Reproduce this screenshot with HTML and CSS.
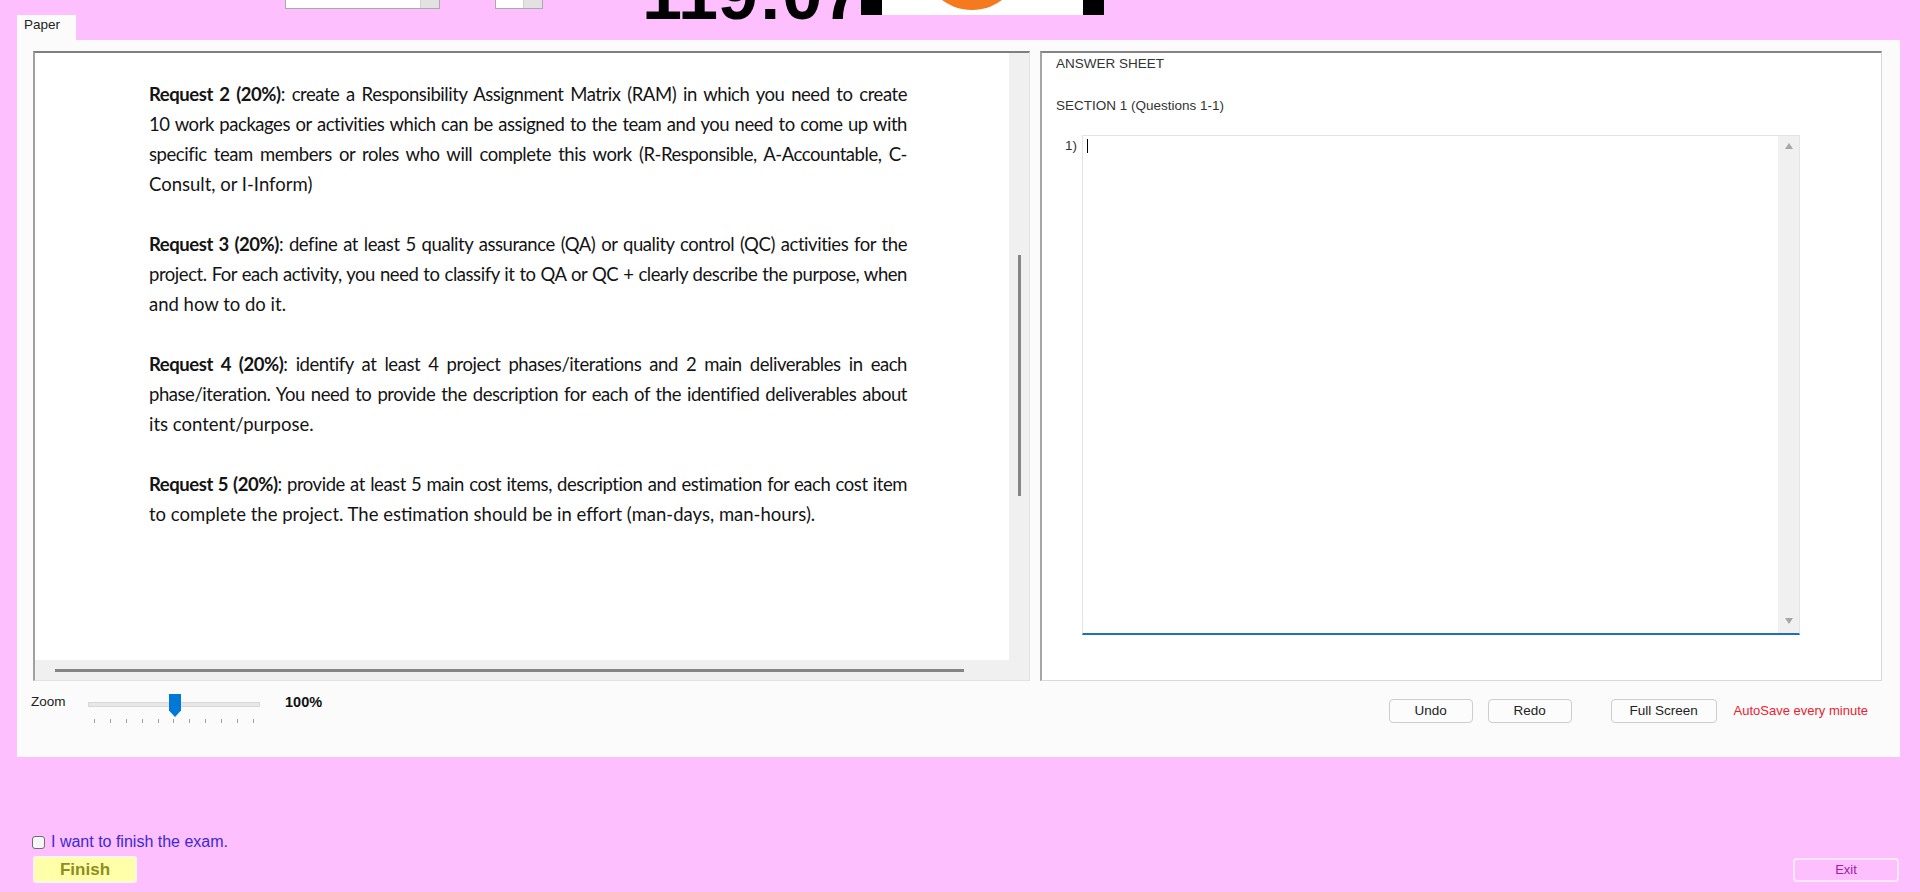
FILE: index.html
```html
<!DOCTYPE html>
<html>
<head>
<meta charset="utf-8">
<title>Exam</title>
<link rel="stylesheet" href="styles.css">
</head>
<body>
<div class="topbar">
  <div class="combo combo-wide"><span class="combo-btn"></span></div>
  <div class="combo combo-small"><span class="combo-btn"></span></div>
  <div class="timer">119:07</div>
  <div class="clock">
    <span class="bar"></span>
    <svg class="logo" width="201" height="15" viewBox="0 0 201 15"><rect width="201" height="15" fill="#ffffff"/><circle cx="90" cy="-40" r="50" fill="#f57a1e"/></svg>
    <span class="bar"></span>
  </div>
</div>
<div class="tabs"><div class="tab">Paper</div></div>
<div class="panel">
  <div class="panes">
    <div class="paper">
      <div class="view">
        <div class="doc">
          <div class="lines">
            <p class="para">
              <span class="ln"><b>Request 2 (20%)</b>: create a Responsibility Assignment Matrix (RAM) in which you need to create</span>
              <span class="ln">10 work packages or activities which can be assigned to the team and you need to come up with</span>
              <span class="ln">specific team members or roles who will complete this work (R-Responsible, A-Accountable, C-</span>
              <span class="ln last">Consult, or I-Inform)</span>
            </p>
            <p class="para">
              <span class="ln"><b>Request 3 (20%)</b>: define at least 5 quality assurance (QA) or quality control (QC) activities for the</span>
              <span class="ln">project. For each activity, you need to classify it to QA or QC + clearly describe the purpose, when</span>
              <span class="ln last">and how to do it.</span>
            </p>
            <p class="para">
              <span class="ln"><b>Request 4 (20%)</b>: identify at least 4 project phases/iterations and 2 main deliverables in each</span>
              <span class="ln">phase/iteration. You need to provide the description for each of the identified deliverables about</span>
              <span class="ln last">its content/purpose.</span>
            </p>
            <p class="para">
              <span class="ln"><b>Request 5 (20%)</b>: provide at least 5 main cost items, description and estimation for each cost item</span>
              <span class="ln last">to complete the project. The estimation should be in effort (man-days, man-hours).</span>
            </p>
          </div>
        </div>
        <div class="vscroll"><span class="vthumb"></span></div>
      </div>
      <div class="hscroll"><span class="hthumb"></span></div>
    </div>
    <div class="answer">
      <div class="as-title">ANSWER SHEET</div>
      <div class="as-section">SECTION 1 (Questions 1-1)</div>
      <div class="q-row">
        <span class="q-num">1)</span>
        <div class="q-box">
          <div class="q-text"><span class="caret"></span></div>
          <div class="q-scroll"><span class="arr-up"></span><span class="arr-down"></span></div>
        </div>
      </div>
    </div>
  </div>
  <div class="controls">
    <div class="zoom">
      <span class="zoom-label">Zoom</span>
      <div class="slider">
        <div class="track"></div>
        <div class="ticks"><i></i><i></i><i></i><i></i><i></i><i></i><i></i><i></i><i></i><i></i><i></i></div>
        <span class="thumb"></span>
      </div>
      <span class="zoom-val">100%</span>
    </div>
    <div class="actions">
      <button class="btn btn-undo">Undo</button>
      <button class="btn btn-redo">Redo</button>
      <button class="btn btn-fs">Full Screen</button>
      <span class="autosave">AutoSave every minute</span>
    </div>
  </div>
</div>
<div class="bottom">
  <label class="agree"><span class="checkbox"></span>I want to finish the exam.</label>
  <div class="bottom-row">
    <button class="finish">Finish</button>
    <button class="exit">Exit</button>
  </div>
</div>
</body>
</html>
```
FILE: styles.css
```css
* { box-sizing: border-box; }
html, body { margin: 0; padding: 0; }
body {
  width: 1920px;
  height: 892px;
  overflow: hidden;
  background: #fdbffd;
  font-family: "Liberation Sans", Arial, sans-serif;
}

/* top strip */
.topbar { display: flex; align-items: flex-start; height: 14px; }
.combo {
  height: 9px;
  background: #ffffff;
  border: 1px solid #a9a9a9;
  border-top: none;
  display: flex;
  justify-content: flex-end;
}
.combo-wide { margin-left: 285px; width: 155px; }
.combo-small { margin-left: 55px; width: 48px; }
.combo-btn { width: 19px; background: #e2e2e2; border-left: 1px solid #d0d0d0; }
.timer {
  margin-left: 99px;
  width: 219px;
  margin-top: -42px;
  font: bold 72px/72px "Liberation Sans", Arial, sans-serif;
  color: #000;
  white-space: nowrap;
}
.clock { display: flex; height: 15px; }
.clock .bar { width: 21px; background: #000; }
.clock .logo { display: block; }

/* tab strip */
.tabs { display: flex; align-items: flex-end; height: 26px; padding-left: 17px; }
.tab {
  width: 59px;
  height: 25px;
  background: #fbfbfb;
  padding: 1px 0 0 7px;
  font: 13.5px/18px "Liberation Sans", Arial, sans-serif;
  color: #222;
}

/* main panel */
.panel {
  margin: 0 20px 0 17px;
  height: 717px;
  background: #fbfbfb;
  padding: 11px 18px 0 16px;
  display: flex;
  flex-direction: column;
}
.panes { display: flex; height: 630px; gap: 10px; }

.paper {
  width: 997px;
  background: #ffffff;
  border-top: 2px solid #7f7f7f;
  border-left: 2px solid #a0a0a0;
  border-right: 1px solid #e2e2e2;
  border-bottom: 1px solid #e2e2e2;
  display: flex;
  flex-direction: column;
}
.view { flex: 1; display: flex; min-height: 0; }
.doc { flex: 1; padding: 26px 0 0 114px; overflow: hidden; }
.lines { width: 758px; font-family: Lato, "Noto Sans", sans-serif; font-size: 18.5px; line-height: 30px; color: #141414; }
.para { margin: 0 0 30px 0; }
.ln { display: block; text-align: justify; text-align-last: justify; white-space: nowrap; letter-spacing: -0.45px; word-spacing: -2px; }
.ln.last { text-align-last: left; letter-spacing: 0; word-spacing: 0; }
.ln b { font-weight: 700; }
.vscroll {
  width: 20px;
  background: #f0f0f0;
  padding-top: 202px;
  display: flex;
  justify-content: center;
  align-items: flex-start;
}
.vthumb { width: 3px; height: 241px; background: #858585; }
.hscroll { height: 20px; background: #f0f0f0; padding: 9px 0 0 20px; }
.hthumb { display: block; width: 909px; height: 3px; background: #858585; }

.answer {
  flex: 1;
  background: #ffffff;
  border-top: 2px solid #858585;
  border-left: 2px solid #a5a5a5;
  border-right: 1px solid #dadada;
  border-bottom: 1px solid #dadada;
  padding-left: 14px;
  font: 13.5px/18px "Liberation Sans", Arial, sans-serif;
  color: #333;
}
.as-title { height: 18px; margin-top: 2px; }
.as-section { margin-top: 24px; height: 18px; }
.q-row { margin-top: 20px; display: flex; }
.q-num { width: 26px; padding: 2px 0 0 9px; }
.q-box {
  width: 718px;
  height: 500px;
  border: 1px solid #e4e4e4;
  border-bottom: 2px solid #1d6fc0;
  display: flex;
  background: #ffffff;
}
.q-text { flex: 1; padding: 3px 0 0 4px; }
.caret { display: block; width: 1px; height: 14px; background: #000; }
.q-scroll {
  width: 21px;
  background: #f0f0f0;
  display: flex;
  flex-direction: column;
  justify-content: space-between;
  align-items: center;
  padding: 7px 0 9px;
}
.arr-up { width: 0; height: 0; border-left: 4px solid transparent; border-right: 4px solid transparent; border-bottom: 6px solid #a6a6a6; }
.arr-down { width: 0; height: 0; border-left: 4px solid transparent; border-right: 4px solid transparent; border-top: 6px solid #a6a6a6; }

/* controls row */
.controls { display: flex; align-items: flex-start; margin-top: 13px; height: 30px; }
.zoom { display: flex; align-items: flex-start; margin-left: -2px; }
.zoom-label {
  width: 57px;
  font: 13.5px/16px "Liberation Sans", Arial, sans-serif;
  color: #222;
}
.slider { position: relative; width: 172px; height: 30px; display: flex; flex-direction: column; }
.track { margin-top: 8px; height: 5px; background: #e7e7e7; border: 1px solid #d8d8d8; }
.ticks { margin-top: 12px; padding: 0 6px; display: flex; justify-content: space-between; }
.ticks i { display: block; width: 1px; height: 4px; background: #a0a0a0; }
.thumb {
  position: absolute;
  left: 81px;
  top: 0;
  width: 12px;
  height: 23px;
  background: #0078d7;
  clip-path: polygon(0 0, 100% 0, 100% 72%, 50% 100%, 0 72%);
}
.zoom-val {
  margin-left: 25px;
  font: bold 14.5px/16px "Liberation Sans", Arial, sans-serif;
  color: #111;
}
.actions { margin-left: auto; margin-right: 14px; margin-top: 5px; display: flex; align-items: center; }
.btn {
  height: 24px;
  padding: 0;
  border: 1px solid #cdcdcd;
  border-radius: 4px;
  background: #fcfcfc;
  font: 13.5px/20px "Liberation Sans", Arial, sans-serif;
  color: #222;
}
.btn-undo { width: 84px; }
.btn-redo { width: 84px; margin-left: 15px; }
.btn-fs { width: 106px; margin-left: 39px; }
.autosave {
  margin-left: 17px;
  font: 13px/18px "Liberation Sans", Arial, sans-serif;
  color: #ee2030;
}

/* bottom area */
.bottom { padding: 0 21px 0 32px; }
.agree {
  display: flex;
  align-items: center;
  height: 16px;
  margin-top: 77px;
  font: 16px/16px "Liberation Sans", Arial, sans-serif;
  color: #3c28d8;
}
.checkbox {
  width: 13px;
  height: 13px;
  border: 1px solid #6e6e6e;
  border-radius: 3px;
  background: #f6f6f6;
  margin-right: 6px;
}
.bottom-row { display: flex; justify-content: space-between; align-items: flex-start; margin-top: 6px; }
.finish {
  margin-left: 1px;
  width: 104px;
  height: 27px;
  padding: 0;
  background: #ffffaa;
  border: 2px solid #fdf8e6;
  border-radius: 3px;
  font: bold 17px/20px "Liberation Sans", Arial, sans-serif;
  color: #8e8e1e;
}
.exit {
  width: 106px;
  height: 24px;
  margin-top: 2px;
  padding: 0;
  background: #fdbffd;
  border: 2px solid #ffe8ff;
  border-radius: 4px;
  font: 13px/18px "Liberation Sans", Arial, sans-serif;
  color: #a0209f;
}
```
